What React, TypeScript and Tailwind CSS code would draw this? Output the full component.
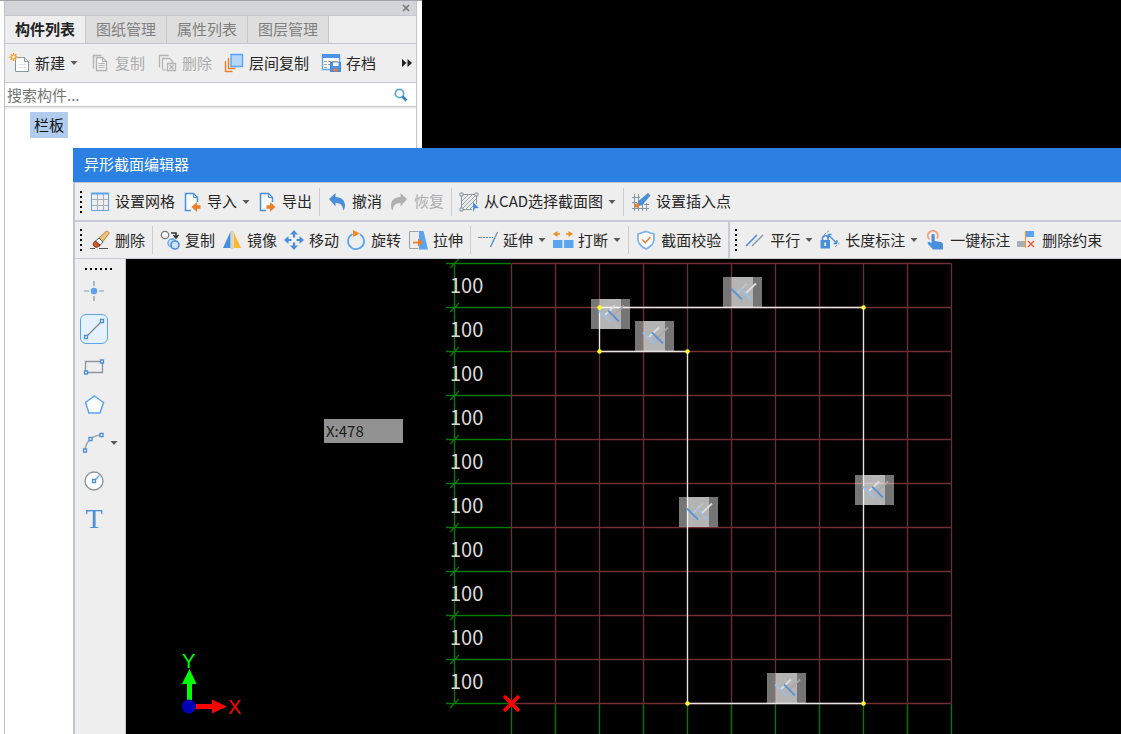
import React from 'react';

const BLUE = '#4a8fdc';
const PALE = '#5ba5f0';
const ORANGE = '#f07e28';
const GRAY = '#8b959c';
const SOFT = '#b4b4b4';

const icons: Record<string, React.ReactNode> = {
    create: (
        <>
            <path d="M5.5 4.5h9l4 4v10h-13z" fill="#fff" stroke={GRAY} />
            <path d="M14.5 4.5v4h4" fill="#dfe6ea" stroke={GRAY} />
            <path d="M8 11.5h8M8 14.5h8" stroke="#dde3e8" />
            <path d="M3.5 0v8M-.5 4h8M.7 1.200l5.600 5.600M6.300 1.200L.7 6.800" stroke="#f7a03a" strokeWidth="1.5" />
            <circle cx="3.5" cy="4" r="1.5" fill="#fff3c8" />
        </>
    ),
    copyOff: (
        <>
            <path d="M3.5 15.5v-13h8" fill="none" stroke={SOFT} strokeWidth="1.4" />
            <path d="M6.5 4.5h6l4 4v9h-10z" fill="#f4f4f4" stroke={SOFT} strokeWidth="1.4" />
            <path d="M12.5 4.5v4h4M8.5 10.5h6M8.5 12.5h6M8.5 14.5h6" fill="none" stroke={SOFT} />
        </>
    ),
    removeOff: (
        <>
            <path d="M2.5 14.5v-12h9M5.5 16.5v-11h7l3 3v2" fill="none" stroke={SOFT} strokeWidth="1.3" />
            <path d="M5.5 17h4" stroke={SOFT} />
            <path d="M10.5 10.5h8v7h-8z" fill="#eee" stroke={SOFT} strokeWidth="1.3" />
            <path d="M12.5 12l4 4M16.5 12l-4 4" stroke={SOFT} strokeWidth="1.3" />
        </>
    ),
    floors: (
        <>
            <path d="M1.5 8v10.500h7" fill="none" stroke={ORANGE} strokeWidth="1.4" />
            <path d="M4.5 5v10.500h7" fill="none" stroke={ORANGE} strokeWidth="1.4" />
            <path d="M7 1.5h11.500v12h-11.500z" fill="#b5d5fb" stroke={PALE} strokeWidth="1.4" />
        </>
    ),
    archive: (
        <>
            <path d="M1.5 2.5h17v14h-17z" fill="#fff" stroke={PALE} strokeWidth="1.4" />
            <path d="M1 1h18v4H1z" fill="#4a93ea" />
            <path d="M3 8.5h3M7 8.5h3M11 8.5h6M3 11.5h3M7 11.5h2M3 14.5h3" stroke="#9aa2a8" />
            <path d="M9.5 9.5h10v9h-10z" fill="#4a93ea" stroke="#3f83d8" />
            <path d="M12 9.5h5.500v3.500h-5.500z" fill="#fff" />
            <path d="M12.5 15.5h4v3h-4z" fill={ORANGE} />
        </>
    ),
    grid: (
        <>
            <path d="M7.5 1v18M13.5 1v18M1 7.5h18M1 13.5h18" stroke="#a6b0b8" />
            <path d="M1.5 1.5h17v17h-17z" fill="none" stroke={PALE} />
            <path d="M1 1.5h18" stroke={PALE} strokeWidth="2" />
        </>
    ),
    importFile: (
        <>
            <path d="M9 18.5H3.500v-17h8l4 4V10" fill="#f8fafc" stroke={BLUE} strokeWidth="1.5" />
            <path d="M11.5 1.5v4h4z" fill="#d7e7fa" stroke={BLUE} />
            <path d="M9.500 15l5.500-5v3.200h3.500v3.600H15V20z" fill={ORANGE} />
        </>
    ),
    exportFile: (
        <>
            <path d="M9 18.5H3.500v-17h8l4 4V10" fill="#f8fafc" stroke={BLUE} strokeWidth="1.5" />
            <path d="M11.5 1.5v4h4z" fill="#d7e7fa" stroke={BLUE} />
            <path d="M18.500 15L13 10v3.200H9.500v3.600H13V20z" fill={ORANGE} />
        </>
    ),
    undo: <path d="M2 7L8.500 1v4c6 0 9.500 3.500 9.500 8.500 0 2.500-.8 4-2 5 .3-5-2.500-7.500-7.500-7.500v3.500z" fill={BLUE} />,
    redo: <path d="M18 7L11.500 1v4C5.500 5 2 8.500 2 13.500c0 2.500.8 4 2 5C3.700 13.500 6.500 11 11.500 11v3.500z" fill="#b0b0b0" />,
    cad: (
        <>
            <path d="M3 9l6-6M3 13L13 3M3 17L17 3M7 17L17 7M11 17l3-3" stroke="#9aa3a9" />
            <path d="M3 2.5h14M2.5 3v14M17.5 3v9M3 17.5h10" stroke={GRAY} />
            <path d="M1 1h3v3H1zM16 1h3v3h-3zM1 16h3v3H1z" fill="#eee" stroke={GRAY} />
            <path d="M14 10l6 6-4 .3-2 3.700z" fill={BLUE} />
        </>
    ),
    insertPoint: (
        <>
            <path d="M3.5 2v17M7.5 2v17M11.5 12v7M1 5.5h8M1 10.5h5M1 16.5h17M13 12.5h5M15.5 11v8" stroke={GRAY} />
            <path d="M17 1l2.500 2.500-6.500 7.500-1 2-5 1 1-5.500z" fill={BLUE} />
            <circle cx="6" cy="13.5" r="2.300" fill={ORANGE} />
        </>
    ),
    erase: (
        <>
            <path d="M9 8l7-6.500c1.500-1 4 1 2.500 2.500L12.500 12z" fill="#f3c078" stroke="#b5854a" />
            <path d="M5 11.5L9 8l4 4-4 4.500z" fill="#fff" stroke="#555" />
            <path d="M5.5 11l-2 2c-1.500 2 2 5.500 4 4l2.500-2z" fill="#d9532c" stroke="#7a3420" />
            <path d="M0 18.500h5M9 18.500h9" stroke="#555" />
        </>
    ),
    duplicate: (
        <>
            <circle cx="5" cy="5" r="3.700" fill="#f6f6f6" stroke="#777" strokeWidth="1.2" />
            <path d="M11 3h5v4M13.5 5l2.500 3 2.500-3" fill="none" stroke="#333" strokeWidth="1.5" />
            <circle cx="12" cy="13" r="4" fill="#cfe3fb" stroke={PALE} strokeWidth="1.3" />
            <circle cx="15" cy="15" r="4" fill="#cfe3fb" stroke={BLUE} strokeWidth="1.6" />
        </>
    ),
    mirror: (
        <>
            <path d="M8.5 1.5V18H1z" fill={BLUE} />
            <path d="M11.5 1.5V18H19z" fill="#f9b934" />
            <path d="M10 1v18" stroke="#bbb" />
        </>
    ),
    move: (
        <>
            <path d="M10 3v4.500M10 12.500V17M3 10h4.500M12.500 10H17" stroke={BLUE} strokeWidth="2.2" />
            <path d="M10 0l4 4.500H6zM10 20l4-4.500H6zM0 10l4.500-4v8zM20 10l-4.500-4v8z" fill={BLUE} />
        </>
    ),
    rotate: (
        <>
            <path d="M14 4.200A8 8 0 1 1 6.500 4" fill="none" stroke={PALE} strokeWidth="1.7" />
            <path d="M7 0l7 3.500L7 7z" fill="#f28a1e" />
        </>
    ),
    stretch: (
        <>
            <path d="M10.5 1.5h-9v17h9" fill="none" stroke="#9aa0a6" />
            <path d="M11 1h4.500L20 19.500h-9z" fill={PALE} />
            <path d="M5 12.500h6" stroke={ORANGE} strokeWidth="1.8" />
            <path d="M10 8.500l5 4-5 4z" fill={ORANGE} />
        </>
    ),
    extend: (
        <>
            <path d="M0 7.5h4" stroke={GRAY} strokeWidth="1.2" />
            <path d="M5 7.5h10" stroke={BLUE} strokeWidth="1.2" strokeDasharray="2 1" />
            <path d="M19.5 2L17 7.500" stroke={GRAY} strokeWidth="1.4" />
            <path d="M17 7.500L12.500 17" stroke={BLUE} strokeWidth="1.4" />
        </>
    ),
    breakUp: (
        <>
            <path d="M0 10h9.500v8H0zM11 10h9.500v8H11z" fill={PALE} />
            <path d="M4 4h3M13 4h3" stroke="#ec8d1f" strokeWidth="1.6" />
            <path d="M0 4l4.500-3v6zM20 4l-4.500-3v6z" fill="#ec8d1f" />
        </>
    ),
    verify: (
        <>
            <path d="M10 1.500l8 2.500v5.500c0 5-4 7.500-8 9.500-4-2-8-4.500-8-9.500V4z" fill="#fdfdfd" stroke="#7ab0ee" strokeWidth="1.7" />
            <path d="M6 9.500l3.200 3.200L14.500 7" fill="none" stroke={ORANGE} strokeWidth="1.6" />
        </>
    ),
    parallel: (
        <>
            <path d="M1 16L12 5" stroke={BLUE} strokeWidth="1.6" />
            <path d="M7 16L18 5" stroke={GRAY} strokeWidth="1.4" />
        </>
    ),
    lengthDim: (
        <>
            <path d="M4 5l5-4.500M15 17l4.500-4" stroke={GRAY} strokeDasharray="3 1" />
            <path d="M8 4.500l9 9M8 4.500h3.500M8 4.500V8M17 13.500h-3.500M17 13.500V10" fill="none" stroke={BLUE} strokeWidth="1.3" />
            <path d="M2.500 10V8.500a2.800 2.800 0 0 1 5.600 0V10" fill="none" stroke={BLUE} strokeWidth="1.6" />
            <path d="M.5 10h9.500v8.500H.5z" fill={BLUE} />
            <path d="M5.200 12.500v3.500" stroke="#fff" strokeWidth="1.5" />
        </>
    ),
    touch: (
        <>
            <path d="M4.500 9.500A5 5 0 1 1 12 8.500" fill="none" stroke="#f5a27a" strokeWidth="1.8" />
            <path d="M6.500 5.500c0-2 3.200-2 3.200 0V11l6.300 1c1.500.3 2 1.500 2 3v4.500H8L3 14c-1-1.500.5-2.500 1.500-2l2 1.200z" fill={BLUE} />
        </>
    ),
    dropConstraint: (
        <>
            <path d="M0 11h8v6H0z" fill="#a9aeb4" />
            <path d="M8.500 1v17" stroke="#e3a04a" strokeWidth="1.3" />
            <path d="M9 1h8v6H9z" fill={PALE} />
            <path d="M11 11l6 6M17 11l-6 6" stroke="#e3573b" strokeWidth="1.4" />
        </>
    ),
    point: (
        <>
            <path d="M10 0v5M10 15v5M0 10h5M15 10h5" stroke={GRAY} strokeWidth="1.2" />
            <circle cx="10" cy="10" r="3.300" fill={PALE} />
        </>
    ),
    line: (
        <>
            <path d="M3 17L17 3" stroke="#7d868c" strokeWidth="1.3" />
            <path d="M.5 16.5h3v3h-3zM16.500 .5h3v3h-3z" fill="#fff" stroke={BLUE} strokeWidth="1.3" />
        </>
    ),
    rect: (
        <>
            <path d="M1.500 4.500h17v11h-17z" fill="none" stroke={GRAY} strokeWidth="1.3" />
            <path d="M.5 14h3v3h-3zM16.500 3h3v3h-3z" fill="#fff" stroke={BLUE} strokeWidth="1.3" />
        </>
    ),
    polygon: <path d="M10.500 1l9 6.500-3.500 10.500H5L1.500 7.500z" fill="#fff" stroke={PALE} strokeWidth="1.5" />,
    arc: (
        <>
            <path d="M1 17C2 8 9 2 18 2" fill="none" stroke="#a4abb0" strokeWidth="1.6" />
            <path d="M-.5 16h3v3h-3zM5 4.500h3v3H5zM16 .5h3v3h-3z" fill="#fff" stroke={BLUE} strokeWidth="1.3" />
        </>
    ),
    circle: (
        <>
            <circle cx="10" cy="10" r="9" fill="#fff" stroke={GRAY} strokeWidth="1.4" />
            <path d="M10 10l5.500-5.500" stroke={PALE} strokeWidth="1.2" />
            <path d="M8.500 8.500h3v3h-3z" fill="#fff" stroke={BLUE} strokeWidth="1.3" />
        </>
    ),
};

const Icon = ({ name }: { name: string }) => (
    <svg viewBox="0 0 20 20" className="size-5 shrink-0 overflow-visible" fill="none" aria-hidden="true">
        {icons[name]}
    </svg>
);

const Caret = () => (
    <svg viewBox="0 0 8 8" className="size-2 shrink-0" aria-hidden="true">
        <path d="M0.5 2h7L4 6z" fill="#5a5a5a" />
    </svg>
);

interface ToolProps {
    icon: string;
    label: string;
    menu?: boolean;
    disabled?: boolean;
}

const Tool = ({ icon, label, menu, disabled }: ToolProps) => (
    <button
        type="button"
        disabled={disabled}
        className="flex h-8 shrink-0 items-center gap-[5px] whitespace-nowrap text-[#262626] disabled:text-[#adadad]"
    >
        <Icon name={icon} />
        <span>{label}</span>
        {menu && <Caret />}
    </button>
);

const Divider = () => <div className="h-7 w-px shrink-0 bg-[#cdcdcd]" />;

const Grip = () => (
    <div className="flex w-[3px] shrink-0 flex-col gap-[3px]">
        {[0, 1, 2, 3, 4].map((i) => (
            <div key={i} className="size-[2px] bg-black" />
        ))}
    </div>
);

const tabs = ['构件列表', '图纸管理', '属性列表', '图层管理'];

const ComponentPanel = () => (
    <aside className="flex min-h-screen w-[422px] flex-col border-t border-[#a0a4aa] bg-white pr-[5px] pl-1">
        <div className="flex flex-1 flex-col border-x border-[#bfc3c9]">
            <div className="flex h-[14px] items-center justify-end bg-[#d3d4da] pr-[6px]">
                <button type="button" aria-label="关闭">
                    <svg viewBox="0 0 8 8" className="size-2">
                        <path d="M1 1l6 6M7 1L1 7" stroke="#777" strokeWidth="1.6" />
                    </svg>
                </button>
            </div>
            <div role="tablist" className="flex h-[29px] border-y border-[#c4c8ce] bg-[#eee]">
                {tabs.map((tab, i) => (
                    <button
                        key={tab}
                        type="button"
                        role="tab"
                        aria-selected={i === 0}
                        className="border-r border-[#c4c8ce] bg-[#dedede] px-[10px] text-[#808080] aria-selected:bg-[#eee] aria-selected:font-bold aria-selected:text-[#222]"
                    >
                        {tab}
                    </button>
                ))}
            </div>
            <div className="flex h-[38px] items-center gap-3 bg-[#eee] pl-[5px]">
                <Tool icon="create" label="新建" menu />
                <Tool icon="copyOff" label="复制" disabled />
                <Tool icon="removeOff" label="删除" disabled />
                <Tool icon="floors" label="层间复制" />
                <Tool icon="archive" label="存档" />
                <button type="button" aria-label="更多" className="ml-auto pr-1">
                    <svg viewBox="0 0 10 8" className="h-2 w-[10px]">
                        <path d="M0 0l4.500 4L0 8zM5.500 0L10 4 5.500 8z" fill="#222" />
                    </svg>
                </button>
            </div>
            <div className="flex h-[25px] items-center border-y border-[#c4c8ce] bg-white pr-2">
                <input
                    type="text"
                    aria-label="搜索构件"
                    placeholder="搜索构件..."
                    className="min-w-0 flex-1 px-[2px] leading-5 outline-none placeholder:text-[#757575]"
                />
                <svg viewBox="0 0 14 14" className="size-[14px]" fill="none" aria-hidden="true">
                    <circle cx="5.500" cy="5.500" r="4.200" stroke="#62aad2" strokeWidth="1.8" />
                    <path d="M8.500 8.500l4 4" stroke="#3585bd" strokeWidth="2.6" />
                </svg>
            </div>
            <div className="flex-1 border-t-2 border-[#eee] pt-[3px] pl-[25px]">
                <button type="button" className="bg-[#b0ccee] px-1 py-[3px] leading-5 text-[#111]">
                    栏板
                </button>
            </div>
        </div>
    </aside>
);

const STEP = 44;
const GRID_X = 385.5;
const GRID_Y = 4.5;
const rows = Array.from({ length: 11 }, (_, i) => GRID_Y + i * STEP);
const cols = Array.from({ length: 11 }, (_, i) => GRID_X + i * STEP);

// outline corners, counted in grid cells
const outline = [[2, 1], [8, 1], [8, 10], [4, 10], [4, 2], [2, 2]].map(([cx, cy]) => [
    GRID_X + cx * STEP,
    GRID_Y + cy * STEP,
]);

const constraints = [
    { x: 465, y: 40, flip: false },
    { x: 509, y: 62, flip: false },
    { x: 597, y: 18, flip: true },
    { x: 553, y: 238, flip: true },
    { x: 729, y: 216, flip: false },
    { x: 641, y: 414, flip: false },
];

const ConstraintMark = ({ x, y, flip }: { x: number; y: number; flip: boolean }) => (
    <g transform={`translate(${x} ${y})`}>
        <path d="M0 0h30v30H0z" fill="#fff" fillOpacity="0.46" />
        <path d="M9 0h30v30H9z" fill="#fff" fillOpacity="0.46" />
        <g strokeWidth="1.8">
            <path d="M14 16l10-9.500" stroke={flip ? '#c4c4c4' : '#dedede'} />
            <path d="M23 16l10-9.500" stroke={flip ? '#dedede' : '#a8a8a8'} />
            <path d="M8 11.500l11 11" stroke={flip ? '#5794da' : '#9cbfe8'} />
            <path d="M17 11.500l11 11" stroke={flip ? '#9cbfe8' : '#5794da'} />
        </g>
    </g>
);

const Canvas = () => (
    <div className="relative min-w-0 flex-1 overflow-hidden bg-black">
        <svg className="h-full w-full" fill="none" role="img" aria-label="截面图">
            <g stroke="#722f32" strokeWidth="1.3">
                {rows.map((y) => (
                    <path key={y} d={`M${GRID_X} ${y}h440`} />
                ))}
                {cols.map((x) => (
                    <path key={x} d={`M${x} ${GRID_Y}v440`} />
                ))}
            </g>
            <g stroke="#007c00" strokeWidth="1.3">
                <path d={`M328.5 ${GRID_Y}v440`} />
                {rows.map((y) => (
                    <path key={y} d={`M320 ${y}h65M324 ${y + 4.5}l9-9`} />
                ))}
                {cols.map((x) => (
                    <path key={x} d={`M${x} 445v600`} />
                ))}
            </g>
            <g fill="#dcdcdc" className="text-xl">
                {rows.slice(0, 10).map((y) => (
                    <text key={y} x="324" y={y + 29.5}>
                        100
                    </text>
                ))}
            </g>
            <path d={`M${outline.map((p) => p.join(' ')).join('L')}z`} stroke="#e6e6e6" strokeWidth="1.3" />
            {constraints.map((c) => (
                <ConstraintMark key={`${c.x}-${c.y}`} {...c} />
            ))}
            {outline.map(([x, y]) => (
                <circle key={`${x}-${y}`} cx={x} cy={y} r="2.2" fill="#ffff20" />
            ))}
            <path d="M378 437l15 15M393 437l-15 15" stroke="#f00" strokeWidth="3.5" />
            <path d="M61 425h5v18h-5zM56 425l7.500-15 7 15z" fill="#0f0" />
            <path d="M68 445h18v5H68zM86 440.500l15 7-15 7z" fill="#f00" />
            <circle cx="63" cy="447.5" r="7" fill="#0000b8" />
            <text x="56" y="409" className="font-['Liberation_Sans'] text-xl" fill="#0f0">
                Y
            </text>
            <text x="102" y="455" className="font-['Liberation_Sans'] text-xl" fill="#f00">
                X
            </text>
        </svg>
        <input
            type="text"
            aria-label="坐标"
            defaultValue="X:478"
            className="absolute top-[160px] left-[198px] h-6 w-[79px] bg-[#929292] px-[2px] pb-[2px] text-[#1a1a1a] outline-none"
        />
    </div>
);

const drawTools = [
    { icon: 'point', label: '点' },
    { icon: 'line', label: '直线', active: true },
    { icon: 'rect', label: '矩形' },
    { icon: 'polygon', label: '多边形' },
    { icon: 'arc', label: '弧线', menu: true },
    { icon: 'circle', label: '圆' },
];

const DrawBar = () => (
    <div className="flex w-[51px] shrink-0 flex-col gap-[6px] border-r border-[#c4c8ce] bg-[#eee] pl-[5px]">
        <div className="flex h-[11px] items-end gap-[3px] pl-[5px]">
            {[0, 1, 2, 3, 4, 5].map((i) => (
                <div key={i} className="size-[2px] bg-black" />
            ))}
        </div>
        <div className="flex flex-col gap-2">
            {drawTools.map((tool) => (
                <div key={tool.icon} className="flex items-center gap-[2px]">
                    <button
                        type="button"
                        aria-label={tool.label}
                        aria-pressed={!!tool.active}
                        className="flex h-[30px] w-7 items-center justify-center rounded-md border border-transparent aria-pressed:border-[#5ba5f0] aria-pressed:bg-[#e5f1fd]"
                    >
                        <Icon name={tool.icon} />
                    </button>
                    {tool.menu && <Caret />}
                </div>
            ))}
            <button type="button" className="h-[30px] w-7 font-['Liberation_Serif'] text-[28px] leading-7 text-[#4a8fdc]">
                T
            </button>
        </div>
    </div>
);

const SectionEditor = () => (
    <section className="absolute top-[148px] right-0 bottom-0 left-[73px] flex flex-col overflow-hidden bg-[#eee]">
        <h1 className="h-[34px] shrink-0 bg-[#2b80e2] pl-[11px] leading-8 text-white">异形截面编辑器</h1>
        <div className="flex min-h-0 flex-1 flex-col border-t border-l-2 border-[#c0c4cc]">
            <div className="flex h-[39px] shrink-0 items-center gap-[7px] border-b-2 border-[#c8cbd2] pl-[5px]">
                <Grip />
                <Tool icon="grid" label="设置网格" />
                <Tool icon="importFile" label="导入" menu />
                <Tool icon="exportFile" label="导出" />
                <Divider />
                <Tool icon="undo" label="撤消" />
                <Tool icon="redo" label="恢复" disabled />
                <Divider />
                <Tool icon="cad" label="从CAD选择截面图" menu />
                <Divider />
                <Tool icon="insertPoint" label="设置插入点" />
            </div>
            <div className="flex h-[37px] shrink-0 items-stretch border-b border-[#c8cbd2]">
                <div className="flex items-center gap-[7px] pr-[7px] pl-[5px]">
                    <Grip />
                    <Tool icon="erase" label="删除" />
                    <Divider />
                    <Tool icon="duplicate" label="复制" />
                    <Tool icon="mirror" label="镜像" />
                    <Tool icon="move" label="移动" />
                    <Tool icon="rotate" label="旋转" />
                    <Tool icon="stretch" label="拉伸" />
                    <Divider />
                    <Tool icon="extend" label="延伸" menu />
                    <Tool icon="breakUp" label="打断" menu />
                    <Divider />
                    <Tool icon="verify" label="截面校验" />
                </div>
                <div className="flex items-center gap-[7px] border-l-2 border-[#c8cbd2] pl-[5px]">
                    <Grip />
                    <Tool icon="parallel" label="平行" menu />
                    <Tool icon="lengthDim" label="长度标注" menu />
                    <Tool icon="touch" label="一键标注" />
                    <Tool icon="dropConstraint" label="删除约束" />
                </div>
            </div>
            <div className="flex min-h-0 flex-1">
                <DrawBar />
                <Canvas />
            </div>
        </div>
    </section>
);

export default function App() {
    return (
        <main className="relative min-h-screen overflow-hidden bg-black font-['Noto_Sans_CJK_SC',sans-serif] text-[15px]">
            <ComponentPanel />
            <SectionEditor />
        </main>
    );
}
